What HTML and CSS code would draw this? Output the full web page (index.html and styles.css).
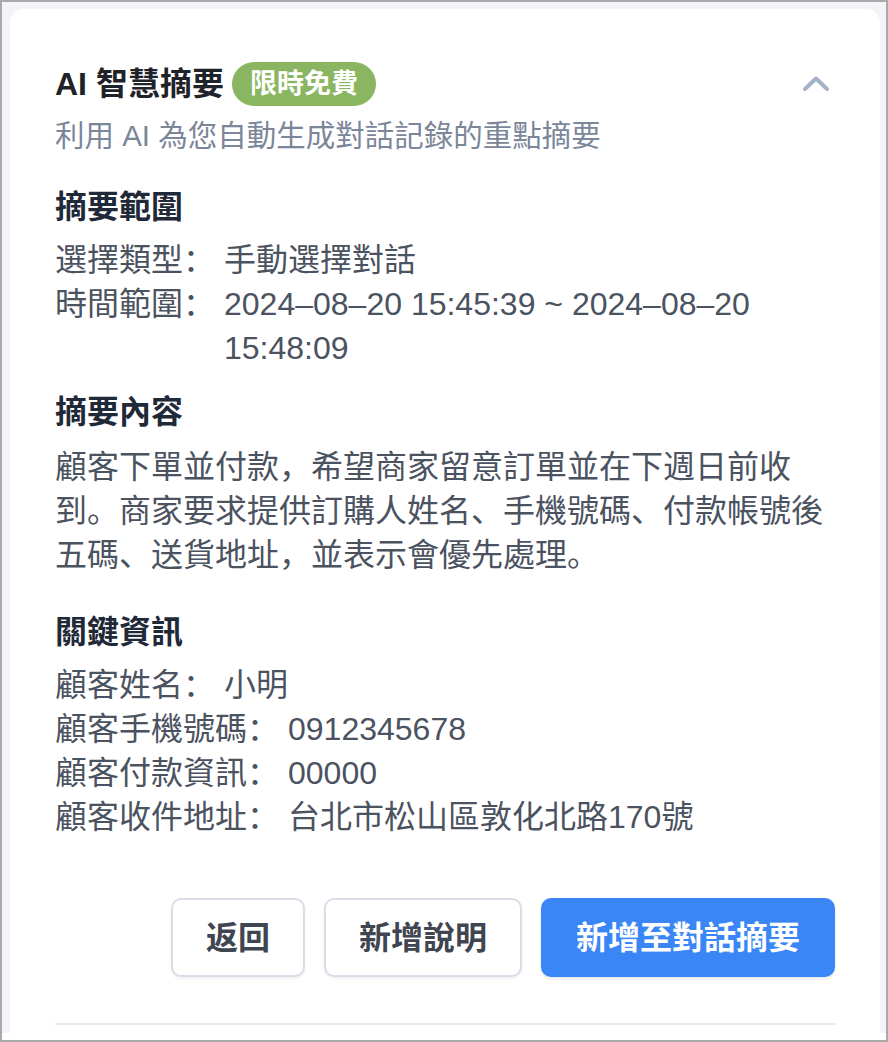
FILE: index.html
```html
<!DOCTYPE html>
<html lang="zh-CN">
<head>
<meta charset="utf-8">
<link rel="stylesheet" href="styles.css">
</head>
<body>
<div class="frame">
  <div class="backdrop">
    <div class="card">
      <div class="head">
        <div class="title-wrap">
          <h1 class="title">AI 智慧摘要</h1>
          <span class="badge">限時免費</span>
        </div>
        <svg class="chevron" width="28" height="18" viewBox="0 0 28 18"><path d="M3 14 L14 3.5 L25 14" fill="none" stroke="#a6b2c7" stroke-width="4" stroke-linecap="round" stroke-linejoin="round"/></svg>
      </div>
      <p class="sub">利用 AI 為您自動生成對話記錄的重點摘要</p>

      <section class="sec sec-range">
        <h2 class="sec-title">摘要範圍</h2>
        <div class="rows">
          <div class="row"><span class="label">選擇類型：</span><span class="value">手動選擇對話</span></div>
          <div class="row"><span class="label">時間範圍：</span><span class="value">2024–08–20 15:45:39 ~ 2024–08–20 15:48:09</span></div>
        </div>
      </section>

      <section class="sec sec-content">
        <h2 class="sec-title">摘要內容</h2>
        <p class="para">顧客下單並付款，希望商家留意訂單並在下週日前收到。商家要求提供訂購人姓名、手機號碼、付款帳號後五碼、送貨地址，並表示會優先處理。</p>
      </section>

      <section class="sec sec-info">
        <h2 class="sec-title">關鍵資訊</h2>
        <div class="rows">
          <div class="row"><span class="label">顧客姓名：</span><span class="value">小明</span></div>
          <div class="row"><span class="label">顧客手機號碼：</span><span class="value">0912345678</span></div>
          <div class="row"><span class="label">顧客付款資訊：</span><span class="value">00000</span></div>
          <div class="row"><span class="label">顧客收件地址：</span><span class="value">台北市松山區敦化北路170號</span></div>
        </div>
      </section>

      <div class="actions">
        <button class="btn btn-outline btn-back">返回</button>
        <button class="btn btn-outline">新增說明</button>
        <button class="btn btn-primary">新增至對話摘要</button>
      </div>
      <div class="divider"></div>
    </div>
  </div>
</div>
</body>
</html>
```

FILE: styles.css
```css
* { box-sizing: border-box; }
html, body { margin: 0; padding: 0; }
body {
  font-family: "Liberation Sans", "Noto Sans CJK SC", sans-serif;
  background: #ffffff;
}
.frame {
  width: 888px;
  height: 1042px;
  border: 2px solid #a9a9a9;
  background: #ffffff;
  overflow: hidden;
}
.backdrop {
  height: 1031px;
  background: #f3f4f8;
  padding: 7px 6px 0 8px;
  overflow: hidden;
}
.card {
  background: #ffffff;
  border-radius: 14px 14px 0 0;
  height: 1040px;
  padding: 53px 45px 0 45px;
}
.head {
  display: flex;
  align-items: center;
  justify-content: space-between;
  height: 44px;
}
.title-wrap {
  display: flex;
  align-items: center;
}
.title {
  margin: 0;
  font-size: 32px;
  font-weight: 700;
  line-height: 44px;
  color: #1f2329;
}
.badge {
  margin-left: 8px;
  background: #8bb661;
  color: #ffffff;
  font-size: 27px;
  font-weight: 700;
  line-height: 44px;
  padding: 0 18px;
  border-radius: 22px;
}
.chevron {
  margin-right: 5px;
  display: block;
}
.sub {
  margin: 8px 0 0;
  font-size: 29.5px;
  line-height: 44px;
  color: #7b8699;
}
.sec-title {
  margin: 0;
  font-size: 32px;
  font-weight: 700;
  line-height: 44px;
  color: #1f2937;
}
.sec-range { margin-top: 27px; }
.sec-content { margin-top: 20px; }
.sec-info { margin-top: 33px; }
.rows { margin-top: 9px; }
.row {
  display: flex;
  gap: 9px;
  font-size: 32px;
  line-height: 44px;
  color: #4b5260;
}
.label { flex: none; }
.value { flex: 1; min-width: 0; }
.para {
  margin: 11px 0 0;
  font-size: 32px;
  line-height: 44px;
  color: #4b5260;
}
.actions {
  display: flex;
  justify-content: flex-end;
  gap: 19px;
  margin-top: 59px;
}
.btn {
  font-family: inherit;
  height: 79px;
  padding: 0 33px;
  font-size: 32px;
  font-weight: 700;
  line-height: 44px;
  border-radius: 10px;
  cursor: pointer;
}
.btn-outline {
  background: #ffffff;
  color: #3f4551;
  border: 2px solid #dadde7;
  box-shadow: 0 2px 3px rgba(30, 40, 70, 0.06);
}
.btn-primary {
  background: #3b86f6;
  color: #ffffff;
  border: 2px solid #3b86f6;
  box-shadow: 0 2px 3px rgba(30, 40, 70, 0.10);
}
.divider {
  margin-top: 46px;
  height: 2px;
  background: #e7e9ef;
}
```
